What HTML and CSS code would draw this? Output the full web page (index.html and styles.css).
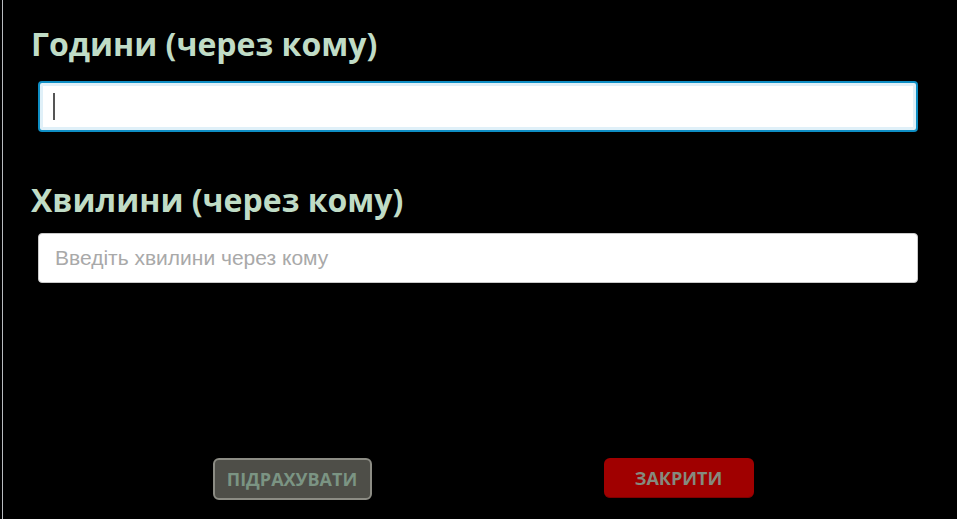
FILE: index.html
```html
<!DOCTYPE html>
<html lang="uk">
<head>
<meta charset="utf-8">
<link rel="stylesheet" href="styles.css">
</head>
<body>
<div class="frame">
  <form class="form">
    <label class="label" for="hours">Години (через кому)</label>
    <div class="field field-focus"><span class="caret"></span></div>
    <label class="label label-second" for="mins">Хвилини (через кому)</label>
    <div class="field field-second"><span class="placeholder">Введіть хвилини через кому</span></div>
    <div class="actions">
      <button type="button" class="btn btn-calc">ПІДРАХУВАТИ</button>
      <button type="button" class="btn btn-close">ЗАКРИТИ</button>
    </div>
  </form>
</div>
</body>
</html>
```
FILE: styles.css
```css
html, body {
  margin: 0;
  padding: 0;
  background: #000;
  height: 100%;
}
.frame {
  margin-left: 2px;
  border-left: 1px solid #b9bcc0;
  height: 519px;
  box-sizing: border-box;
  overflow: hidden;
}
.form {
  display: flex;
  flex-direction: column;
  padding: 0 0 0 28px;
}
.label {
  font-family: "Open Sans", sans-serif;
  font-weight: 700;
  font-size: 32px;
  line-height: 40px;
  color: #c0dcc6;
  margin-top: 24px;
}
.label-second {
  margin-top: 48px;
}
.field {
  margin: 17px 0 0 7px;
  width: 880px;
  height: 51px;
  box-sizing: border-box;
  background: #fff;
  border: 1px solid #c9c9c9;
  border-radius: 4px;
  display: flex;
  align-items: center;
  padding-left: 16px;
}
.field-second {
  margin-top: 13px;
  height: 50px;
}
.field-focus {
  border: 2px solid #0e8ec4;
  box-shadow: inset 0 0 0 3px #e0f0f8;
  padding-left: 13px;
}
.caret {
  width: 2px;
  height: 27px;
  background: #555;
}
.placeholder {
  font-family: "Liberation Sans", Arial, sans-serif;
  font-size: 21px;
  color: #a9a9a9;
}
.actions {
  display: flex;
  justify-content: center;
  gap: 232px;
  margin-top: 175px;
  padding-right: 22px;
}
.btn {
  font-family: "Open Sans", sans-serif;
  font-weight: 700;
  font-size: 18px;
  border-radius: 6px;
  height: 42px;
  box-sizing: border-box;
  padding: 0;
  cursor: default;
}
.btn-calc {
  width: 159px;
  background: #4e4e48;
  border: 2px solid #8c8c84;
  color: #7b9483;
}
.btn-close {
  width: 150px;
  height: 40px;
  background: #a00000;
  border: none;
  border-bottom: 1px solid #7c0000;
  color: #858a7e;
}
```
